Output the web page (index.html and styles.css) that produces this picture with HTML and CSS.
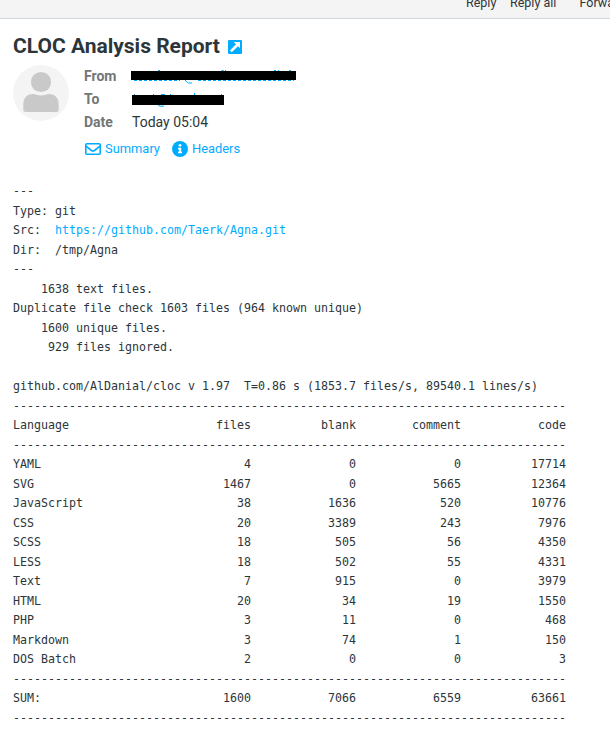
FILE: index.html
```html
<!DOCTYPE html>
<html lang="en">
<head>
<meta charset="utf-8">
<title>CLOC Analysis Report</title>
<link rel="stylesheet" href="styles.css">
</head>
<body>
<nav class="toolbar"><span class="reply">Reply</span><span class="reply-all">Reply all</span><span>Forward</span></nav>
<main class="message">
<h1 class="subject">CLOC Analysis Report
<svg class="open" viewBox="0 0 14 14"><rect width="14" height="14" rx="1.2" fill="#00acff"/><path d="M5.800 2H12v6.200L10 6.200 3.700 12.300 1.900 10.500 8 4.200z" fill="#fff"/></svg></h1>
<header class="header">
<svg class="avatar" viewBox="0 0 56 56"><circle cx="28" cy="28" r="28" fill="#f4f4f4"/><circle cx="28" cy="17" r="10.1" fill="#c9c9c9"/><path d="M10.3 44.5v-5.2c0-6.5 4-10.3 9.5-10.3 3 0 4.500 1.400 8.200 1.400s5.200-1.400 8.200-1.400c5.500 0 9.500 3.800 9.500 10.300v5.200q0 2.500-2.600 2.500H12.900q-2.600 0-2.600-2.500z" fill="#c9c9c9"/></svg>
<div class="details">
<div class="field"><b>From</b><svg class="redacted" viewBox="0 0 166 16"><path d="M27 3.500h2M90.500 3.500h2M94 3.500h1M143 3.500h2M147 3.500h1M158 3.500h2M3 13.500h46M67 13.500h96" stroke="#00acff" stroke-dasharray="3 2" fill="none"/><path d="M54 13l1.500 1.800 2 1.200h3.500" stroke="#00acff" fill="none"/><rect y="4" width="165" height="9"/></svg></div>
<div class="field"><b>To</b><svg class="redacted" viewBox="0 0 166 16"><path d="M3 4.500h1M22 4.500h1M30 4.500h4M39 4.500h1M63.500 3v2M90 4.500h1" stroke="#00acff"/><path d="M27 15l2 1.200h4" stroke="#00acff" fill="none"/><rect x="1" y="5" width="92" height="10"/></svg></div>
<div class="field"><b>Date</b><span>Today 05:04</span></div>
<div class="links">
<a><svg class="mail" viewBox="0 0 16 12"><rect x=".8" y=".8" width="14.400" height="10.400" rx="1" fill="none" stroke="#00acff" stroke-width="1.600"/><path d="M1 3.200l5.500 4.300q1.500 1.100 3 0L15 3.200" fill="none" stroke="#00acff" stroke-width="1.600"/></svg>Summary</a>
<a><svg class="info" viewBox="0 0 16 16"><circle cx="8" cy="8" r="8" fill="#00acff"/><circle cx="8" cy="4.300" r="1.400" fill="#fff"/><path d="M6 6.700h3.200v4H10v1.500H6v-1.500h.9V8.200H6z" fill="#fff"/></svg>Headers</a>
</div>
</div>
</header>
<section class="body">
<pre>---
Type: git
Src:  <a>https://github.com/Taerk/Agna.git</a>
Dir:  /tmp/Agna
---
    1638 text files.
Duplicate file check 1603 files (964 known unique)
    1600 unique files.
     929 files ignored.

github.com/AlDanial/cloc v 1.97  T=0.86 s (1853.7 files/s, 89540.1 lines/s)
-------------------------------------------------------------------------------</pre>
<div class="row"><span>Language</span><span>files</span><span>blank</span><span>comment</span><span>code</span></div>
<pre>-------------------------------------------------------------------------------</pre>
<div class="row"><span>YAML</span><span>4</span><span>0</span><span>0</span><span>17714</span></div>
<div class="row"><span>SVG</span><span>1467</span><span>0</span><span>5665</span><span>12364</span></div>
<div class="row"><span>JavaScript</span><span>38</span><span>1636</span><span>520</span><span>10776</span></div>
<div class="row"><span>CSS</span><span>20</span><span>3389</span><span>243</span><span>7976</span></div>
<div class="row"><span>SCSS</span><span>18</span><span>505</span><span>56</span><span>4350</span></div>
<div class="row"><span>LESS</span><span>18</span><span>502</span><span>55</span><span>4331</span></div>
<div class="row"><span>Text</span><span>7</span><span>915</span><span>0</span><span>3979</span></div>
<div class="row"><span>HTML</span><span>20</span><span>34</span><span>19</span><span>1550</span></div>
<div class="row"><span>PHP</span><span>3</span><span>11</span><span>0</span><span>468</span></div>
<div class="row"><span>Markdown</span><span>3</span><span>74</span><span>1</span><span>150</span></div>
<div class="row"><span>DOS Batch</span><span>2</span><span>0</span><span>0</span><span>3</span></div>
<pre>-------------------------------------------------------------------------------</pre>
<div class="row"><span>SUM:</span><span>1600</span><span>7066</span><span>6559</span><span>63661</span></div>
<pre>-------------------------------------------------------------------------------</pre>
</section>
</main>
</body>
</html>
```
FILE: styles.css
```css
* { box-sizing: border-box; }
body { margin: 0; background: #fff; color: #2c363a; font-family: Roboto, sans-serif; overflow: hidden; }
.toolbar { height: 19px; background: #f4f4f4; border-bottom: 1px solid #d0d8dd; display: flex; padding-left: 466px; font-size: 12.5px; line-height: 14px; white-space: nowrap; overflow: hidden; }
.toolbar span { margin-top: -4px; flex: none; }
.toolbar .reply { width: 44px; }
.toolbar .reply-all { width: 69.500px; }
.message { padding: 14px 13px 0; }
.subject { margin: 0; font-size: 21px; line-height: 26px; height: 32px; font-weight: 700; display: flex; gap: 8px; }
.open { width: 14px; height: 14px; margin-top: 7px; }
.header { display: flex; height: 117px; }
.avatar { width: 56px; height: 56px; flex: none; }
.details { margin-left: 15px; }
.field { display: flex; height: 23px; line-height: 23px; font-size: 14px; }
.field b { width: 48px; color: #737677; font-weight: 700; }
.redacted { width: 166px; height: 16px; margin: 2px 0 0 -1px; overflow: visible; }
.links { display: flex; gap: 12px; height: 29px; align-items: center; font-size: 12.9px; margin-left: 1px; }
.links a { display: flex; align-items: center; gap: 4px; }
a { color: #00acff; }
.mail { width: 16px; height: 12px; }
.info { width: 16px; height: 16px; }
.body { font: 11.63px/19.5px "DejaVu Sans Mono", monospace; width: 554px; }
pre { margin: 0; font: inherit; }
.row { display: grid; grid-template-columns: 133px repeat(4, 105px); height: 19.5px; }
.row span + span { text-align: right; }
```
